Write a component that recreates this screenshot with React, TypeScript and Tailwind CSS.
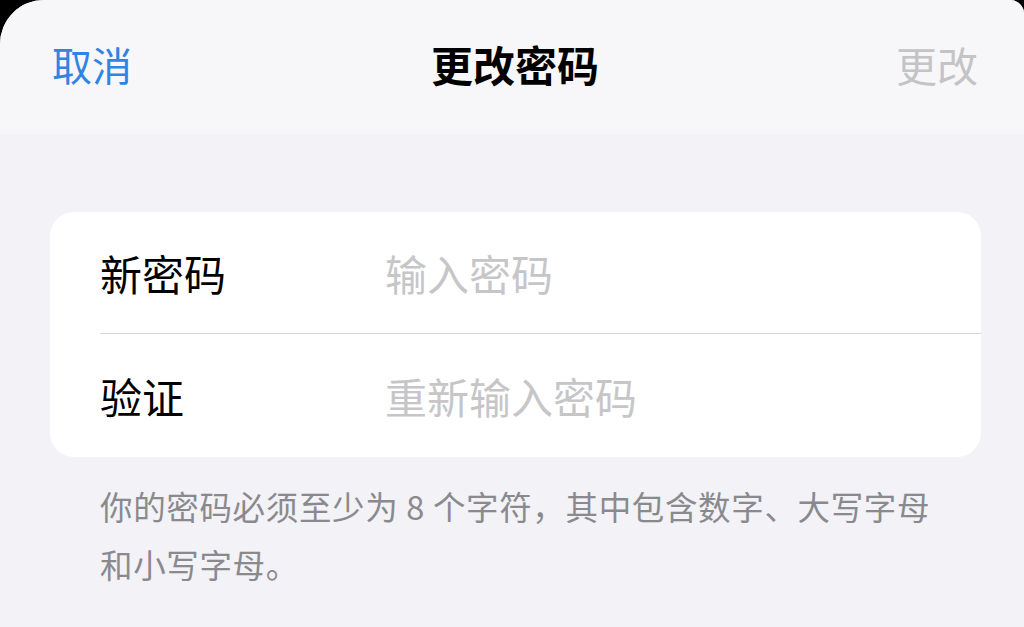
import React from "react";

export default function App() {
  const font = { fontFamily: '"Noto Sans CJK SC", "Noto Sans", sans-serif' };
  return (
    <div className="w-[1024px] h-[627px] bg-black overflow-hidden" style={font}>
      <div className="w-full h-full bg-[#f2f2f7] rounded-tl-[44px] rounded-tr-[14px] overflow-hidden flex flex-col">
        <div className="h-[134px] bg-[#f7f7fa] flex items-center justify-between pl-[52px] pr-[46px] pb-[6px]">
          <span className="text-[40px] leading-none text-[#2f84e4] w-[150px]">取消</span>
          <span className="text-[42px] leading-none font-bold text-black">更改密码</span>
          <span className="text-[41px] leading-none text-[#c4c4c7] w-[150px] text-right">更改</span>
        </div>
        <div className="mt-[78px] ml-[50px] mr-[43px] bg-white rounded-[24px] flex flex-col">
          <div className="h-[121px] flex items-center pl-[50px]">
            <span className="w-[285px] shrink-0 text-[42px] leading-none text-black">新密码</span>
            <span className="text-[42px] leading-none text-[#c6c6c8]">输入密码</span>
          </div>
          <div className="ml-[50px] h-px bg-[#d8d8dc]" />
          <div className="h-[123px] flex items-center pl-[50px]">
            <span className="w-[285px] shrink-0 text-[42px] leading-none text-black">验证</span>
            <span className="text-[42px] leading-none text-[#c6c6c8]">重新输入密码</span>
          </div>
        </div>
        <div className="mt-[20px] pl-[100px] pr-[20px] text-[32.5px] tracking-[0.65px] leading-[58px] text-[#8a8a8e] whitespace-nowrap">
          你的密码必须至少为 8 个字符，其中包含数字、大写字母
          <br />
          和小写字母。
        </div>
      </div>
    </div>
  );
}
